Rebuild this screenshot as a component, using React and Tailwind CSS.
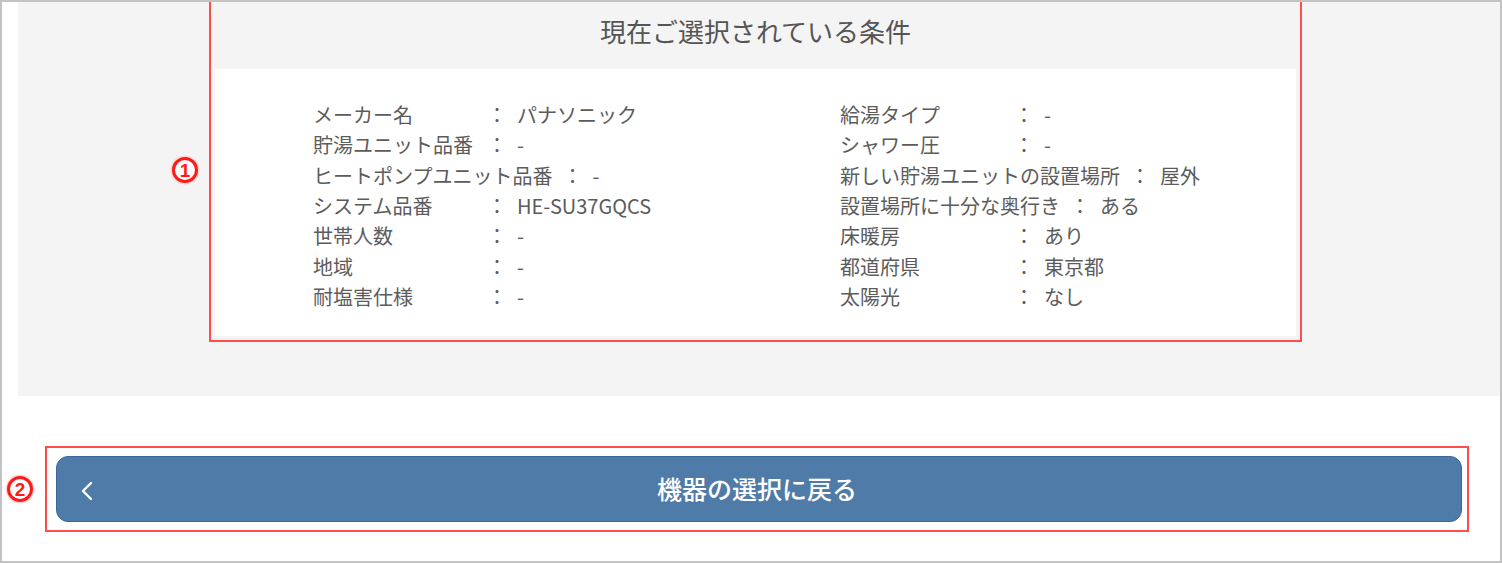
import React from "react";

const LEFT = [
  ["メーカー名", "パナソニック"],
  ["貯湯ユニット品番", "-"],
  ["ヒートポンプユニット品番", "-"],
  ["システム品番", "HE-SU37GQCS"],
  ["世帯人数", "-"],
  ["地域", "-"],
  ["耐塩害仕様", "-"],
];

const RIGHT = [
  ["給湯タイプ", "-"],
  ["シャワー圧", "-"],
  ["新しい貯湯ユニットの設置場所", "屋外"],
  ["設置場所に十分な奥行き", "ある"],
  ["床暖房", "あり"],
  ["都道府県", "東京都"],
  ["太陽光", "なし"],
];

const Row = ({ label, value }) => (
  <div className="flex h-[30.3px] items-center whitespace-nowrap">
    <span className="min-w-[164px]">{label}</span>
    <span className="ml-[10px] w-[20px] text-center">：</span>
    <span className="ml-[10px]">{value}</span>
  </div>
);

const Marker = ({ n, className }) => (
  <span
    className={`absolute flex h-[26px] w-[26px] items-center justify-center rounded-full border-[3px] border-[#ff1a1a] bg-white text-[19px] font-bold leading-none text-[#ff1a1a] shadow-[0_0_0_1.5px_#ffd6d6] ${className}`}
    style={{ fontFamily: '"Liberation Sans", sans-serif' }}
  >
    {n}
  </span>
);

export default function App() {
  return (
    <div
      className="h-[563px] w-[1502px] overflow-hidden border-2 border-[#c3c3c3] bg-white text-[#5c5c5c]"
      style={{ fontFamily: '"Noto Sans CJK JP", "Noto Sans", sans-serif' }}
    >
      {/* gray panel */}
      <div className="ml-[16px] h-[394px] bg-[#f4f4f4]">
        <div className="relative ml-[191px] h-[340px] w-[1093px] border-x-2 border-b-2 border-[#ff4d4d] px-[4px] pb-[4px]">
          <Marker n="1" className="left-[-39px] top-[155px]" />
          <div className="flex h-full flex-col">
            <div className="h-[67px] bg-[#f4f4f4] pt-[10px] text-center text-[26px] leading-[38px] text-[#555]">
              現在ご選択されている条件
            </div>
            <div className="grid flex-1 grid-cols-[527px_1fr] bg-white pl-[98px] pt-[31px] text-[20px]">
              <div>
                {LEFT.map(([l, v]) => (
                  <Row key={l} label={l} value={v} />
                ))}
              </div>
              <div>
                {RIGHT.map(([l, v]) => (
                  <Row key={l} label={l} value={v} />
                ))}
              </div>
            </div>
          </div>
        </div>
      </div>

      {/* back button */}
      <div className="relative ml-[43px] mt-[50px] h-[86px] w-[1424px] border-2 border-[#ff4d4d] pb-[8px] pl-[9px] pr-[5px] pt-[8px]">
        <Marker n="2" className="left-[-40px] top-[28px]" />
        <button className="relative flex h-full w-full items-center justify-center rounded-[12px] border border-[#3c6898] bg-[#4f7ba8] text-[25px] font-medium text-white">
          <svg
            className="absolute left-[23px] top-[24px]"
            width="14"
            height="20"
            viewBox="0 0 14 20"
            fill="none"
            stroke="white"
            strokeWidth="2.4"
            strokeLinecap="round"
            strokeLinejoin="round"
          >
            <polyline points="11,2 3,10 11,18" />
          </svg>
          <span className="-ml-[4px]">機器の選択に戻る</span>
        </button>
      </div>
    </div>
  );
}
